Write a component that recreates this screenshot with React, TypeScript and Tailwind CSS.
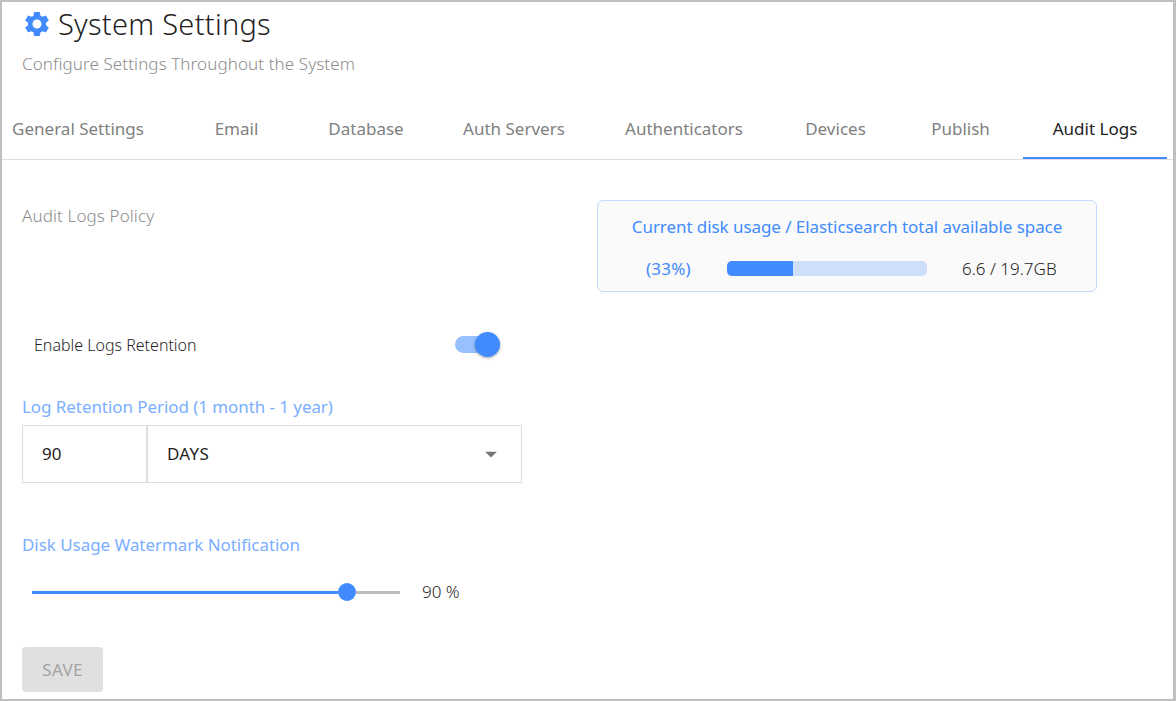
import { useState } from "react"
import clsx from "clsx"
import { MdArrowDropDown, MdSettings } from "react-icons/md"

const tabs = [
  { label: "General Settings", className: "w-[172px] pr-[20px]" },
  { label: "Email", className: "w-[125px]" },
  { label: "Database", className: "w-[134px]" },
  { label: "Auth Servers", className: "w-[162px]" },
  { label: "Authenticators", className: "w-[178px]" },
  { label: "Devices", className: "w-[125px]" },
  { label: "Publish", className: "w-[125px]" },
  { label: "Audit Logs", className: "w-[144px]" },
]

function Header() {
  return (
    <header className="h-[97px] pl-5">
      <div className="flex h-11 items-center">
        <MdSettings className="h-[30px] w-[30px] text-[#418bff]" />
        <h1 className="ml-[6px] text-[29px] leading-[44px] font-light tracking-[0.27px]">System Settings</h1>
      </div>
      <p className="mt-[6px] text-[17px] leading-6 font-light tracking-[0.1px] text-[#8c8c8c]">
        Configure Settings Throughout the System
      </p>
    </header>
  )
}

function DiskUsage({ used, total }: { used: number; total: number }) {
  const percent = Math.floor((used / total) * 100)

  return (
    <div className="flex h-[92px] w-[500px] flex-col rounded-md border border-[#c5dcff] bg-[#fafafa] text-[17px]">
      <div className="mt-[14px] text-center leading-6 tracking-[-0.07px] text-[#418bff]">
        Current disk usage / Elasticsearch total available space
      </div>
      <div className="mt-[18px] flex h-6 items-center">
        <div className="ml-12 w-[81px] tracking-[0.2px] text-[#418bff]">({percent}%)</div>
        <div className="mb-px h-[15px] w-[200px] overflow-hidden rounded-[5px] bg-[#cddffb]">
          <div className="h-full bg-[#418bff]" style={{ width: `${percent}%` }} />
        </div>
        <div className="ml-[35px] font-light">
          {used} / {total}GB
        </div>
      </div>
    </div>
  )
}

export default function App() {
  const [activeTab, setActiveTab] = useState("Audit Logs")
  const [enabled, setEnabled] = useState(true)

  return (
    <div className="h-[701px] w-[1176px] overflow-hidden border-2 border-r-[3px] border-[#bfbfbf] bg-white font-['Noto_Sans',sans-serif] text-[#1f1f1f]">
      <Header />

      <nav className="flex h-[61px] border-b border-[#dedede]">
        {tabs.map((tab) => (
          <button
            key={tab.label}
            onClick={() => setActiveTab(tab.label)}
            className={clsx(
              "h-[60px] shrink-0 border-b-2 pt-[2px] text-[17px] whitespace-nowrap",
              tab.className,
              activeTab === tab.label ? "border-[#418bff] text-[#212121]" : "border-transparent text-[#808080]"
            )}
          >
            {tab.label}
          </button>
        ))}
      </nav>

      <main className="pl-5">
        <div className="flex pt-10">
          <h2 className="w-[575px] pt-[4px] text-[17px] leading-6 font-light tracking-[0.12px] text-[#8c8c8c]">
            Audit Logs Policy
          </h2>
          <DiskUsage used={6.6} total={19.7} />
        </div>

        <div className="mt-10 flex h-[26px] items-center">
          <span className="w-[433px] pl-3 text-[16px] font-light">Enable Logs Retention</span>
          <button
            role="switch"
            aria-checked={enabled}
            onClick={() => setEnabled(!enabled)}
            className="mb-px flex h-[17px] w-[45px] items-center rounded-full bg-[#97c0ff]"
          >
            <span
              className={clsx(
                "h-[25px] w-[25px] shrink-0 rounded-full bg-[#418bff] shadow-[0_1px_3px_rgba(0,0,0,0.35)]",
                enabled && "ml-auto"
              )}
            />
          </button>
        </div>

        <div className="mt-[37px] text-[17px] leading-6 tracking-[-0.07px] text-[#7aaeff]">
          Log Retention Period (1 month - 1 year)
        </div>
        <div className="mt-[6px] flex h-[58px] w-[500px] text-[17px]">
          <div className="flex w-[125px] items-center border border-[#dedede] pl-[19px]">90</div>
          <div className="flex flex-1 items-center justify-between border border-[#dedede] pr-4 pl-[19px]">
            <span className="tracking-[0.3px]">DAYS</span>
            <MdArrowDropDown className="h-7 w-7 text-[#757575]" />
          </div>
        </div>

        <div className="mt-[50px] text-[17px] leading-6 tracking-[-0.05px] text-[#7aaeff]">
          Disk Usage Watermark Notification
        </div>
        <div className="mt-[23px] flex h-6 items-center">
          <div className="ml-[10px] flex w-[368px] items-center">
            <div className="h-[3px] w-[306px] bg-[#418bff]" />
            <div className="h-[18px] w-[18px] rounded-full bg-[#418bff]" />
            <div className="h-[3px] flex-1 bg-[#bdbdbd]" />
          </div>
          <span className="ml-[22px] text-[17px] font-light">90 %</span>
        </div>

        <button className="mt-[43px] h-[45px] w-[81px] rounded-[4px] bg-[#e0e0e0] text-[17px] tracking-[0.3px] text-[#a3a3a3]">
          SAVE
        </button>
      </main>
    </div>
  )
}
